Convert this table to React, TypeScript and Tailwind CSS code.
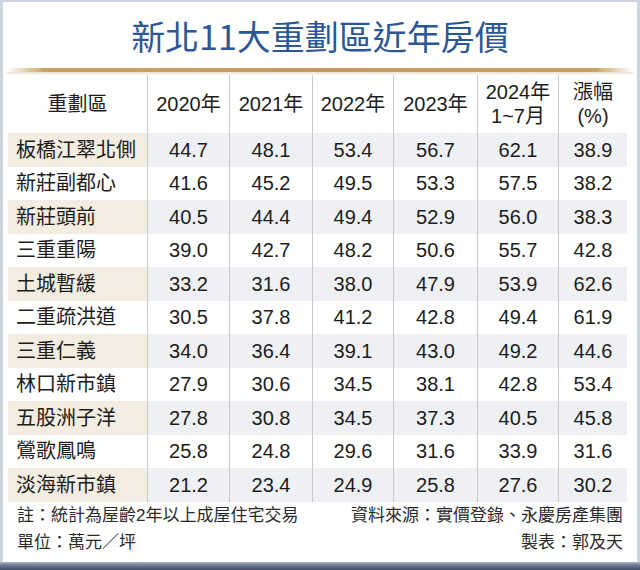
const rows: [string, string[]][] = [
  ["板橋江翠北側", ["44.7", "48.1", "53.4", "56.7", "62.1", "38.9"]],
  ["新莊副都心", ["41.6", "45.2", "49.5", "53.3", "57.5", "38.2"]],
  ["新莊頭前", ["40.5", "44.4", "49.4", "52.9", "56.0", "38.3"]],
  ["三重重陽", ["39.0", "42.7", "48.2", "50.6", "55.7", "42.8"]],
  ["土城暫緩", ["33.2", "31.6", "38.0", "47.9", "53.9", "62.6"]],
  ["二重疏洪道", ["30.5", "37.8", "41.2", "42.8", "49.4", "61.9"]],
  ["三重仁義", ["34.0", "36.4", "39.1", "43.0", "49.2", "44.6"]],
  ["林口新市鎮", ["27.9", "30.6", "34.5", "38.1", "42.8", "53.4"]],
  ["五股洲子洋", ["27.8", "30.8", "34.5", "37.3", "40.5", "45.8"]],
  ["鶯歌鳳鳴", ["25.8", "24.8", "29.6", "31.6", "33.9", "31.6"]],
  ["淡海新市鎮", ["21.2", "23.4", "24.9", "25.8", "27.6", "30.2"]],
];

const cols = "grid grid-cols-[139px_82px_83px_81px_84px_81px_69px]";

export default function App() {
  return (
    <div className="flex h-[570px] w-[640px] flex-col overflow-hidden bg-white font-['Liberation_Sans','Noto_Sans_CJK_TC',sans-serif] text-[#1c1c1c]">
      <div className="flex flex-1 flex-col border-x-[3px] border-t-2 border-[#cdd3df] bg-white">
        {/* title */}
        <div className="flex h-[66px] items-center justify-center pt-[2px]">
          <h1 className="font-['Noto_Sans_CJK_TC',sans-serif] text-[34px] font-normal leading-none text-[#2b5797]">
            新北11大重劃區近年房價
          </h1>
        </div>
        <div className="mx-1 h-[4px] bg-[linear-gradient(90deg,rgba(200,162,100,0)_0%,#c9a364_6%,#c49a58_50%,#c9a364_94%,rgba(200,162,100,0)_100%)] shadow-[0_2px_2px_rgba(180,150,100,0.25)]" />

        {/* table */}
        <div className="mt-[3px] ml-[5px]">
          <div className={`${cols} h-[58px] text-[20px] leading-[24px]`}>
            <div className="flex items-center justify-center">重劃區</div>
            {["2020年", "2021年", "2022年", "2023年"].map((y) => (
              <div key={y} className="flex items-center justify-center border-l border-[#c9c9c9]">
                {y}
              </div>
            ))}
            <div className="flex flex-col items-center justify-center border-l border-[#c9c9c9]">
              <span>2024年</span>
              <span>1~7月</span>
            </div>
            <div className="flex flex-col items-center justify-center border-l border-[#c9c9c9]">
              <span>漲幅</span>
              <span>(%)</span>
            </div>
          </div>

          {rows.map(([name, vals], i) => {
            const shaded = i % 2 === 0;
            return (
              <div key={name} className={`${cols} h-[33.5px] text-[20px] leading-none`}>
                <div className={`flex items-center pl-2 ${shaded ? "bg-[#f3ece0]" : ""}`}>{name}</div>
                {vals.map((v, j) => (
                  <div
                    key={j}
                    className={`flex items-center justify-center border-l border-[#c9c9c9] ${shaded ? "bg-[#eff0f3]" : ""}`}
                  >
                    {v}
                  </div>
                ))}
              </div>
            );
          })}
        </div>

        {/* notes */}
        <div className="px-[14px] text-[17px] leading-[27px] text-[#2a2a2a]">
          <div className="flex justify-between">
            <span>註：統計為屋齡2年以上成屋住宅交易</span>
            <span>資料來源：實價登錄、永慶房產集團</span>
          </div>
          <div className="flex justify-between">
            <span>單位：萬元／坪</span>
            <span>製表：郭及天</span>
          </div>
        </div>
      </div>
      <div className="h-[8px] bg-[linear-gradient(180deg,#aab3c6_0%,#6e7a93_40%,#3f4a62_100%)]" />
    </div>
  );
}
